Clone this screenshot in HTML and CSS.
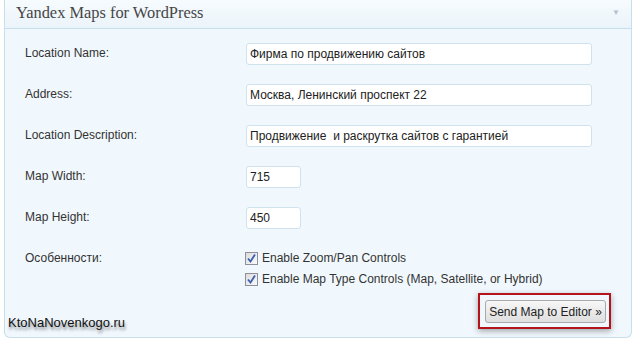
FILE: index.html
```html
<!DOCTYPE html>
<html lang="en">
<head>
    <meta charset="UTF-8">
    <title>Yandex Maps for WordPress</title>
    <link rel="stylesheet" href="styles.css">
</head>
<body>

<div class="postbox">
    <div class="postbox-head">
        <h3>Yandex Maps for WordPress</h3>
        <span class="toggle">&#9660;</span>
    </div>
    <div class="postbox-inside">
        <div class="form-grid">
            <label class="form-label" for="locName">Location Name:</label>
            <div class="form-field"><input class="text-wide" id="locName" type="text" value="Фирма по продвижению сайтов"></div>

            <label class="form-label" for="locAddr">Address:</label>
            <div class="form-field"><input class="text-wide" id="locAddr" type="text" value="Москва, Ленинский проспект 22"></div>

            <label class="form-label" for="locDesc">Location Description:</label>
            <div class="form-field"><input class="text-wide" id="locDesc" type="text" value="Продвижение  и раскрутка сайтов с гарантией"></div>

            <label class="form-label" for="mapWidth">Map Width:</label>
            <div class="form-field"><input class="text-small" id="mapWidth" type="text" value="715"></div>

            <label class="form-label" for="mapHeight">Map Height:</label>
            <div class="form-field"><input class="text-small" id="mapHeight" type="text" value="450"></div>

            <div class="form-label">Особенности:</div>
            <div class="form-field checks">
                <label class="check"><span class="box"><svg width="9" height="9" viewBox="0 0 9 9"><path d="M1 4.5 L3.5 7.5 L8 0.5" fill="none" stroke="#3d5fb0" stroke-width="1.8"/></svg></span>Enable Zoom/Pan Controls</label>
                <label class="check"><span class="box"><svg width="9" height="9" viewBox="0 0 9 9"><path d="M1 4.5 L3.5 7.5 L8 0.5" fill="none" stroke="#3d5fb0" stroke-width="1.8"/></svg></span>Enable Map Type Controls (Map, Satellite, or Hybrid)</label>
            </div>
        </div>
        <div class="submit-row">
            <div class="highlight">
                <button class="button">Send Map to Editor &raquo;</button>
            </div>
        </div>
    </div>
</div>

<div class="watermark">KtoNaNovenkogo.ru</div>

</body>
</html>
```

FILE: styles.css
```css
/* Basic styling */
body {
    margin: 0;
    font-family: "Liberation Sans", Arial, sans-serif;
    font-size: 12px;
    color: #333;
    background: #fff;
    position: relative;
    height: 340px;
}
.postbox {
    margin-left: 4px;
    width: 626px;
    height: 337px;
    border: 1px solid #c6dfeb;
    border-top: none;
    border-radius: 0 0 6px 6px;
    background: #f1f8fd;
}
.postbox-head {
    height: 28px;
    border-bottom: 1px solid #c6dfeb;
    background: linear-gradient(#f6fbfe, #ebf4fa);
    display: flex;
    align-items: center;
    justify-content: space-between;
    padding: 0 11px 0 11px;
}
.postbox-head h3 {
    margin: 0;
    font-family: "Liberation Serif", Georgia, serif;
    font-weight: normal;
    font-size: 16.4px;
    color: #464646;
    padding-bottom: 2px;
}
.toggle {
    font-size: 8px;
    color: #b4c1cb;
    padding-bottom: 3px;
}
.postbox-inside {
    padding: 14px 20px 0 20px;
}
.form-grid {
    display: grid;
    grid-template-columns: 221px 1fr;
    row-gap: 19px;
}
.form-label {
    padding-top: 3px;
    line-height: 15px;
}
.form-field input {
    height: 22px;
    box-sizing: border-box;
    border: 1px solid #cfe2ed;
    border-radius: 3px;
    background: #fff;
    font-family: "Liberation Sans", Arial, sans-serif;
    font-size: 12px;
    color: #222;
    padding: 0 3px;
    margin: 0;
    display: block;
}
.text-wide {
    width: 346px;
}
.text-small {
    width: 55px;
}
.checks {
    display: flex;
    flex-direction: column;
    gap: 6px;
    padding-top: 3px;
}
.check {
    display: flex;
    align-items: center;
    gap: 4px;
    line-height: 15px;
    margin-left: -1px;
}
.box {
    width: 11px;
    height: 11px;
    border: 1px solid #8f8f9d;
    background: linear-gradient(135deg, #dcdcdc, #fafafa);
    display: flex;
    align-items: center;
    justify-content: center;
}
.submit-row {
    display: flex;
    justify-content: flex-end;
    margin-top: 6px;
}
.highlight {
    border: 2px solid #b3141c;
    padding: 5px 3px 4px 5px;
    box-shadow: 0 2px 6px rgba(0, 0, 0, 0.35);
}
.button {
    display: block;
    height: 23px;
    width: 121px;
    border: 1px solid #a9a9a9;
    border-radius: 3px;
    background: linear-gradient(#f7f7f7, #dedede);
    font-family: "Liberation Sans", Arial, sans-serif;
    font-size: 12px;
    color: #222;
    padding: 0;
}
.watermark {
    position: absolute;
    left: 8px;
    top: 315px;
    font-family: "Liberation Sans", Arial, sans-serif;
    font-size: 13px;
    color: #111;
    text-shadow: 1px 3px 3px rgba(0, 0, 0, 0.45);
}
```
